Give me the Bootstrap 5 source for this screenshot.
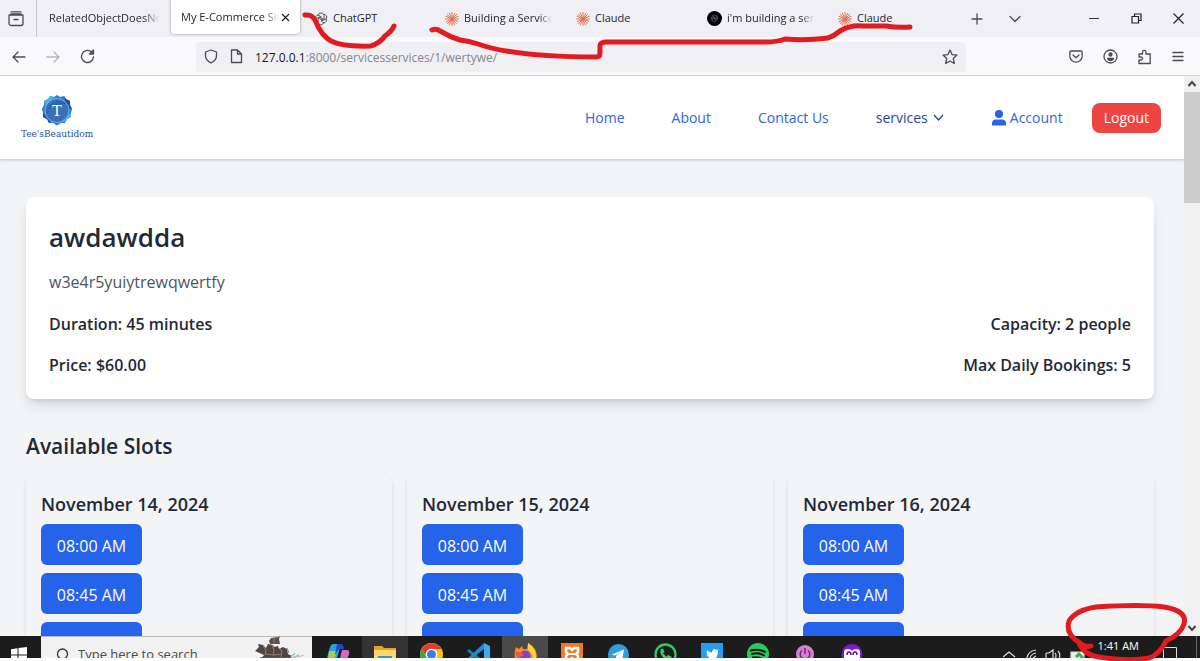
<!DOCTYPE html>
<html lang="en">
<head>
<meta charset="utf-8">
<meta name="viewport" content="width=device-width, initial-scale=1">
<title>My E-Commerce Site</title>
<link href="https://cdn.jsdelivr.net/npm/bootstrap@5.3.0/dist/css/bootstrap.min.css" rel="stylesheet">
<style>
body{font-family:"Open Sans","Noto Sans",sans-serif;color:#1f2937;background:#fff}
button{border:0;background:none;padding:0;color:inherit}
svg{display:block;flex:none}
.line-icon{fill:none;stroke:#4b4b55;stroke-width:1.3;stroke-linecap:round;stroke-linejoin:round}
/* browser */
.tabstrip{height:37px;background:#f0f0f4;font-size:11px;color:#26262c;padding-right:1px}
.history{width:37px;border-right:1px solid #c4c4cc;margin-right:2px}
.browser-tab{flex:0 1 131px;min-width:0;height:36px;padding:0 11px 0 13px;gap:5px}
.browser-tab span{white-space:nowrap;overflow:hidden;flex:1;text-align:left}
.fade-end span{-webkit-mask-image:linear-gradient(90deg,#000 85%,transparent);mask-image:linear-gradient(90deg,#000 85%,transparent)}
.browser-tab.text-only{padding:0 10px}
.browser-tab.current{flex-basis:129px;height:34px;background:#fff;border-radius:0 0 4px 4px;box-shadow:0 0 3px #0006;padding:0 10px;gap:2px;margin:0 1px;align-self:flex-start}
.tool-btn{width:34px;height:34px}
.wide-btn{width:42px;height:34px}
.toolbar{height:39px;background:#f9f9fb;border-bottom:1px solid #d3d3d8;padding:1px 5px 0 2px}
.address{flex:0 1 770px;height:30px;background:#f0f0f4;border-radius:4px;font-size:12px;padding:0 8px;gap:12px;margin-left:92px;color:#85858d}
.address span{padding-top:2px}
.address b{font-weight:400;color:#18181c}
/* site */
.viewport{background:#f3f4f6}
.site-nav{height:83px;background:#fff;box-shadow:0 1px 3px #0003;padding:0 23px 0 21px;font-size:14px}
.site-nav a{color:#2f66dd;text-decoration:none}
.brand-text{font:10px/14px "DejaVu Serif Condensed","DejaVu Serif",serif;color:#24509c}
.nav-links{gap:47px}
.btn-logout{background:#ef4444;color:#fff;border-radius:8px;height:30px;padding:0 12px;margin-left:-18px}
.site-main{padding:38px 30px 0 26px}
.service-card{background:#fff;border-radius:8px;box-shadow:0 8px 14px -3px #0002,0 3px 6px -3px #0002;padding:22px 23px}
.service-title{font-size:26px;line-height:36px;font-weight:600;margin:0 0 15px}
.service-text{font-size:16px;line-height:24px;color:#4b5563;margin:0 0 19px}
.facts{gap:18px}
.fact{font-size:16px;line-height:23px;font-weight:600}
.section-title{font-size:21px;line-height:30px;font-weight:600;margin:32px 0 14px}
.day-grid{display:grid;grid-template-columns:repeat(3,1fr);gap:15px}
.day-card{border-radius:8px;box-shadow:0 2px 4px #0000001c;padding:15px;height:260px}
.day-title{font-size:18px;line-height:28px;font-weight:600;margin:0 0 6px}
.slot{background:#2563eb;color:#fff;border-radius:6px;height:41px;min-width:101px;padding:2px 15px 0;font-size:16px}
.scroll-track{width:16px;background:#f0f0f0}
.scroll-thumb{height:111px;background:#cdcdcd}
/* desktop bar */
.deskbar{height:22px;background:#1c1c1c;margin-bottom:3px;color:#fff;font-size:12px}
.start-btn{width:41px;padding:11px 0 0 11px}
.search-box{width:271px;height:22px;background:#f2f2f2;border-top:1px solid #bbb;padding:7px 8px 0 13px}
.search-box input{border:0;background:none;outline:0;font-size:13px;line-height:20px;height:20px;width:150px;padding:0;color:#444}
.search-box input::placeholder{color:#4a4a4a;opacity:1}
.ship{margin-top:-8px}
.apps{width:560px;margin-left:3px}
.apps button{flex:1;height:22px;padding-top:7px;overflow:hidden}
.apps svg{margin:0 auto}
.apps .running{background:#333}
.apps .focused{background:#4a4a4a}
.tray{padding-right:3px}
.clock{line-height:20px;font-size:11px}
.tray-end{margin-left:23px}
/* pen marks lie over everything */
.ink{position:absolute;fill:none;stroke:#e11b1f;stroke-width:5;stroke-linecap:round;stroke-linejoin:round;pointer-events:none}
.ink-top{left:0;top:0}
.ink-clock{right:0;bottom:0}
</style>
</head>
<body class="vh-100 d-flex flex-column overflow-hidden position-relative">
<svg width="0" height="0" class="position-absolute"><defs>
<g id="burst" stroke="#dc7350" stroke-width="1" stroke-linecap="round"><path d="M7 .5V13.500M.5 7H13.500M2.300 2.600l9.200 9M11.700 2.300l-9.200 9.400M4.300 .9l5.200 12.200M9.800 1.200L4.300 12.800M1 4.300l12 5.200M1.200 9.800l11.900-5.500"/></g>
</defs></svg>

<div class="tabstrip d-flex align-items-center flex-shrink-0">
  <button class="history h-100 d-flex align-items-center justify-content-center" aria-label="History"><svg class="line-icon me-1" width="16" height="16" viewBox="0 0 16 16"><path d="M3 .8h10M1 4.200h14v8.300a2 2 0 0 1-2 2H3a2 2 0 0 1-2-2zM1.500 4l1.500-1h10l1.500 1M6 8.500h4"/></svg></button>
  <button class="browser-tab text-only fade-end d-flex align-items-center"><span>RelatedObjectDoesNo</span></button>
  <button class="browser-tab current fade-end d-flex align-items-center"><span>My E-Commerce Sit</span><svg width="9" height="9" viewBox="0 0 9 9" stroke="#222" stroke-width="1.200"><path d="M1 1l7 7M8 1L1 8"/></svg></button>
  <button class="browser-tab d-flex align-items-center"><svg width="14" height="14" viewBox="0 0 14 14" fill="none" stroke="#555" stroke-width="1"><g id="knot"><path d="M7 1a3 3 0 0 1 3 2v4L7 8.700M10 2.300a3 3 0 0 1 2.600 4L9 8.500 5.500 6.500M12 6.500A3 3 0 0 1 10 11L7 9M9.500 11A3 3 0 0 1 4 11V7l3-2M4 11.500A3 3 0 0 1 1.500 7l3.500-2 4 2M2 7.500A3 3 0 0 1 4 3l3.500 2M4 3a3 3 0 0 1 3-2"/></g></svg><span>ChatGPT</span></button>
  <button class="browser-tab fade-end d-flex align-items-center"><svg width="14" height="14"><use href="#burst"/></svg><span>Building a Service</span></button>
  <button class="browser-tab d-flex align-items-center"><svg width="14" height="14"><use href="#burst"/></svg><span>Claude</span></button>
  <button class="browser-tab fade-end d-flex align-items-center"><svg width="15" height="15" viewBox="0 0 16 16"><circle cx="8" cy="8" r="8"/><g transform="translate(3.500 3.500) scale(.64)" fill="none" stroke="#777"><use href="#knot"/></g></svg><span>i'm building a serv</span></button>
  <button class="browser-tab d-flex align-items-center"><svg width="14" height="14"><use href="#burst"/></svg><span>Claude</span></button>
  <button class="tool-btn d-flex align-items-center justify-content-center mx-1" aria-label="New tab"><svg class="line-icon" width="12" height="12"><path d="M6 1v10M1 6h10"/></svg></button>
  <button class="tool-btn d-flex align-items-center justify-content-center" aria-label="List tabs"><svg class="line-icon" width="12" height="12"><path d="M1 3.500l5 5 5-5"/></svg></button>
  <div class="ms-auto d-flex">
    <button class="wide-btn d-flex align-items-center justify-content-center" aria-label="Minimise"><svg width="10" height="10" stroke="#333"><path d="M0 4.500h10"/></svg></button>
    <button class="wide-btn d-flex align-items-center justify-content-center" aria-label="Restore"><svg width="11" height="11" fill="none" stroke="#222" stroke-width="1.200"><path d="M1 3.500h6.500V10H1zM3.500 3.500V1H10v6.500H7.500"/></svg></button>
    <button class="wide-btn d-flex align-items-center justify-content-center" aria-label="Close"><svg width="11" height="11" stroke="#222" stroke-width="1.200"><path d="M.5.5l10 10M10.500.5l-10 10"/></svg></button>
  </div>
</div>

<div class="toolbar d-flex align-items-center flex-shrink-0">
  <button class="tool-btn d-flex align-items-center justify-content-center" aria-label="Back"><svg class="line-icon" width="14" height="14"><path d="M13 7H1M6 2L1 7l5 5"/></svg></button>
  <button class="tool-btn d-flex align-items-center justify-content-center" aria-label="Forward" disabled><svg class="line-icon" opacity=".4" width="14" height="14"><path d="M1 7h12M8 2l5 5-5 5"/></svg></button>
  <button class="tool-btn d-flex align-items-center justify-content-center" aria-label="Reload"><svg class="line-icon" width="15" height="15"><path d="M13.500 8A6 6 0 1 1 11 2.600l2 2M13.500 1v4h-4z"/></svg></button>
  <div class="address d-flex align-items-center">
    <svg class="line-icon" width="14" height="15"><path d="M7 1l5.500 2v4c0 3-2.500 5.500-5.500 7C4 12.500 1.500 10 1.500 7V3z"/></svg>
    <svg class="line-icon" width="13" height="15"><path d="M1.500 1H7.500l4 4v8.500h-10zM7.500 1v4h4"/></svg>
    <span class="flex-grow-1"><b>127.0.0.1</b>:8000/servicesservices/1/wertywe/</span>
    <button aria-label="Bookmark"><svg class="line-icon" width="16" height="16"><path d="M8 1l2 4.600 5 .5-3.700 3.400 1 5L8 12l-4.300 2.500 1-5L1 6.100l5-.5z"/></svg></button>
  </div>
  <div class="ms-auto d-flex">
    <button class="tool-btn d-flex align-items-center justify-content-center" aria-label="Save"><svg class="line-icon" width="14" height="13"><path d="M2 1h10a1.200 1.200 0 0 1 1.200 1.200V6A6 6 0 0 1 .8 6V2.200A1.200 1.200 0 0 1 2 1zM4 5l3 2.700L10 5"/></svg></button>
    <button class="tool-btn d-flex align-items-center justify-content-center" aria-label="Profile"><svg class="line-icon" width="15" height="15"><circle cx="7.500" cy="7.500" r="6.500"/><circle cx="7.500" cy="5.500" r="1.500" fill="#4b4b55"/><path fill="#4b4b55" d="M4.500 9.500h6q-.5 2-3 2T4.500 9.500z"/></svg></button>
    <button class="tool-btn d-flex align-items-center justify-content-center" aria-label="Extensions"><svg class="line-icon" width="15" height="16"><path d="M2 5h3.500V3a1.700 1.700 0 0 1 3.400 0v2h4.300v9.500H2V11h2a1.500 1.500 0 0 0 0-3H2z"/></svg></button>
    <button class="tool-btn d-flex align-items-center justify-content-center" aria-label="Menu"><svg class="line-icon" width="12" height="12"><path d="M1 1.500h10M1 5.500h10M1 9.500h10"/></svg></button>
  </div>
</div>

<div class="d-flex flex-grow-1 overflow-hidden">
  <div class="viewport flex-grow-1 overflow-hidden">
    <nav class="site-nav d-flex align-items-center justify-content-between">
      <a href="#" class="d-flex flex-column align-items-center">
        <svg width="32" height="33" viewBox="0 0 32 33"><path fill="#2c82c9" d="M16 1l3 2 4-1 2 3 4 2v4l2 4-1 4 0 4-4 2-2 4-4 0-4 2.500-4-2.500-4 0-2-4-4-2 0-4-1-4 2-4V7l4-2 2-3 4 1z"/><path fill="#1c4e96" d="M23 2l2 3 4 2v4l2 4-5 0zM2 19l8 8-2 2-2-4-4-2z"/><path fill="#49b6e6" d="M3 7l4-2 2-3 4 1-8 9zM22 29l4-4 4-2 0-4-7 7z"/><circle cx="16" cy="16.500" r="12" fill="#3a6fb9" stroke="#7ab4e4"/><path fill="#2c5ba8" d="M6 20Q10 9 26 10A12 12 0 0 0 6 20z" opacity=".6"/><text x="16" y="22" text-anchor="middle" font-family="Liberation Serif,serif" font-size="16" fill="#fff">T</text></svg>
        <span class="brand-text">Tee'sBeautidom</span>
      </a>
      <div class="nav-links d-flex align-items-center">
        <a href="#">Home</a><a href="#">About</a><a href="#">Contact Us</a>
        <a href="#" class="d-flex align-items-center gap-1" style="color:#2446a8">services <svg width="13" height="12" fill="none" stroke="#2446a8" stroke-width="1.300"><path d="M2 3l4.500 5L11 3"/></svg></a>
        <a href="#" class="d-flex align-items-center gap-1"><svg width="14" height="16" fill="#2563eb"><circle cx="7" cy="4" r="4"/><path d="M0 15.500v-2Q0 9.500 4 9.500h6q4 0 4 4v2z"/></svg>Account</a>
        <button class="btn-logout">Logout</button>
      </div>
    </nav>
    <main class="site-main">
      <section class="service-card">
        <h1 class="service-title">awdawdda</h1>
        <p class="service-text">w3e4r5yuiytrewqwertfy</p>
        <div class="facts d-flex flex-column">
          <div class="fact d-flex justify-content-between"><span>Duration: 45 minutes</span><span>Capacity: 2 people</span></div>
          <div class="fact d-flex justify-content-between"><span>Price: $60.00</span><span>Max Daily Bookings: 5</span></div>
        </div>
      </section>
      <h2 class="section-title">Available Slots</h2>
      <div class="day-grid">
        <section class="day-card"><h3 class="day-title">November 14, 2024</h3><div class="d-flex flex-column align-items-start gap-2"><button class="slot">08:00 AM</button><button class="slot">08:45 AM</button><button class="slot" aria-label="Next slot"></button></div></section>
        <section class="day-card"><h3 class="day-title">November 15, 2024</h3><div class="d-flex flex-column align-items-start gap-2"><button class="slot">08:00 AM</button><button class="slot">08:45 AM</button><button class="slot" aria-label="Next slot"></button></div></section>
        <section class="day-card"><h3 class="day-title">November 16, 2024</h3><div class="d-flex flex-column align-items-start gap-2"><button class="slot">08:00 AM</button><button class="slot">08:45 AM</button><button class="slot" aria-label="Next slot"></button></div></section>
      </div>
    </main>
  </div>
  <div class="scroll-track d-flex flex-column flex-shrink-0">
    <svg width="16" height="16" fill="none" stroke="#444" stroke-width="2"><path d="M4.500 10L8 6l3.500 4"/></svg>
    <div class="scroll-thumb"></div>
    <svg class="mt-auto" width="16" height="16" fill="none" stroke="#444" stroke-width="2"><path d="M4.500 6L8 10l3.500-4"/></svg>
  </div>
</div>

<div class="deskbar d-flex overflow-hidden flex-shrink-0">
  <button class="start-btn flex-shrink-0" aria-label="Start"><svg width="16" height="16" fill="#fff"><path d="M0 2.200L6.500 1.200V7.500H0zM7.500 1L16 0v7.500H7.500zM0 8.500h6.500v6.300L0 13.800zM7.500 8.500H16V16l-8.500-1z"/></svg></button>
  <div class="search-box d-flex gap-2 flex-shrink-0">
    <svg class="mt-1" width="16" height="16" fill="none" stroke="#333" stroke-width="1.300"><circle cx="8.500" cy="6" r="5"/><path d="M5 10l-4 4"/></svg>
    <input type="text" aria-label="Search" placeholder="Type here to search">
    <svg class="ship ms-auto" width="50" height="30" viewBox="0 0 50 30"><path d="M1 15l4-4-1-3 5 1 3 3 2-4 5 1 1 2 4-1 1 3 4-2 4 2 1 5 4 2-4 5-5 3H11l-4-5 3-4z" fill="#51463f"/><path d="M15 5l2-3 7-1 2-1-1 3 1 5-10 0z" fill="#5c5048"/><path d="M9 10l3 4-1 5m7-10l2 5-1 5m7-7l2 4-1 5m6-9l2 5M20 2v6M12 18l8 1 8-1" fill="none" stroke="#8f8073"/><path d="M37 21l4-4m-4 6l8-4" stroke="#8ac2da" stroke-width="1.500"/><path d="M44 21l6-2" stroke="#d8b595"/><path d="M6 21h30l-3 6H10z" fill="#77503a"/></svg>
  </div>
  <div class="apps d-flex flex-shrink-0">
    <button aria-label="Copilot"><svg width="24" height="24"><path fill="#2c9fe0" d="M7 1h8l-5 18H3Q0 19 1 15L4 4q1-3 3-3z"/><path fill="#a5cf4c" d="M3 8h8L8 17H2z"/><path fill="#2446c8" d="M11 1h4q2 0 3 5h-4q-2 0-3 3l-2 3z"/><path fill="#d467c7" d="M16 7h5q3 0 2 4l-3 9q-1 3-4 3h-4z"/></svg></button>
    <button class="running" aria-label="Files"><svg width="22" height="22"><path fill="#e6a22c" d="M0 3h8l2 2h12v4H0z"/><path fill="#ffd667" d="M0 7h22v14H0z"/><path fill="#3d8cd8" d="M4 13h14v9H4z"/></svg></button>
    <button aria-label="Chrome"><svg width="23" height="23"><circle cx="11.500" cy="11.500" r="11.500" fill="#fbc116"/><path fill="#e33b2e" d="M1.500 6A11.500 11.500 0 0 1 21.500 6H11.500L7 14z"/><path fill="#2da94f" d="M1.500 6l6 10 4 7A11.500 11.500 0 0 1 1.500 6z"/><circle cx="11.500" cy="11.500" r="5.800" fill="#fff"/><circle cx="11.500" cy="11.500" r="4.500" fill="#3c7fec"/></svg></button>
    <button aria-label="Code"><svg width="23" height="23"><path fill="#1679bd" d="M2 6l15 12v5L0 8z"/><path fill="#1f8ad2" d="M17 0v6L2 18l-2-2z"/><path fill="#3baaf2" d="M17 0l6 3v17l-6 3z"/></svg></button>
    <button class="focused" aria-label="Firefox"><svg width="23" height="23"><path fill="#ff8a24" d="M2 4l3 2 3-3 1 3h4l1-6q7 4 8 9 3 8-3 12-8 4-14 0Q-2 15 2 4z"/><path fill="#ffd43a" d="M14 0q8 5 8 14l-3 5q1-8-5-12z"/><circle cx="11" cy="13" r="5.500" fill="#7b3fe0"/><path fill="#f2583a" d="M1 9l6 0 3 3-4 2 5 4-7 1z"/></svg></button>
    <button aria-label="XAMPP"><svg width="22" height="22"><path fill="#ee7a24" d="M0 0h22v22H0z"/><path d="M5 5h4l2 2 2-2h4v4l-2 2 2 2v4h-4l-2-2-2 2H5v-4l2-2-2-2z" fill="none" stroke="#fff" stroke-width="2.500" stroke-linejoin="round"/><path d="M8 11h6" stroke="#fff" stroke-width="2"/></svg></button>
    <button aria-label="Telegram"><svg width="21" height="22"><circle cx="10.500" cy="11.500" r="10.500" fill="#2f9fdb"/><path fill="#fff" d="M4 11.500L16 6.500l-2 11-4-3-2 2v-3.500l5-4-6 3.500z"/></svg></button>
    <button aria-label="WhatsApp"><svg width="23" height="23" fill="none"><circle cx="11.500" cy="11.500" r="10" stroke="#35c863" stroke-width="2.300"/><path fill="#35c863" d="M7 6l2-.5L10.500 9 9 10.500l3.500 3L14 12l3.500 1.500-.5 3Q9 18 6.500 10 6 7.500 7 6z"/></svg></button>
    <button aria-label="Twitter"><svg width="22" height="22"><path fill="#249df0" d="M0 0h22v22H0z"/><path fill="#fff" d="M6 7q2.500 2.500 5 2.500Q11 6 14 6l2 1 1.500-.5L17 8q0 9-7 9l-4-1 2.500-1-2-2L5.500 10z"/></svg></button>
    <button aria-label="Spotify"><svg width="22" height="22" fill="none" stroke="#111" stroke-width="2" stroke-linecap="round"><circle cx="11" cy="11" r="11" fill="#24cc5c" stroke="none"/><path d="M4 7.500q8-2 14 1.500M5 11q7-2 12 1.500M6 14.500q6-1 9 1.500"/></svg></button>
    <button aria-label="Power"><svg width="20" height="22" fill="none" stroke="#7a2377" stroke-width="1.500"><circle cx="10" cy="11" r="9" fill="#d77fd0" stroke="none"/><path d="M10 5v6M7 7.500a4.800 4.800 0 1 0 6 0"/></svg></button>
    <button aria-label="Owl"><svg width="22" height="22"><circle cx="11" cy="11.500" r="10.500" fill="#8018cc"/><path fill="#fff" d="M3 9q0-3 4-3 3 0 4 2 1-2 4-2 4 0 4 3v7H3z"/><path fill="none" stroke="#51149c" stroke-width="1.500" d="M6 12q0-3 2-3t2 3M12 12q0-3 2-3t2 3"/></svg></button>
  </div>
  <div class="tray ms-auto d-flex">
    <svg width="95" height="22" fill="none" stroke="#ddd" stroke-width="1.200"><path d="M0 21l6-5 6 5M24 22q1-7 9-8M27 22q1-4 6-5M30 22l3-2M43 17h3l4-3v8M43 17v6M52 17q2 2 0 6M55 15q3 3 1 8"/><path d="M68 16h13v8H68z" fill="#eee"/><path d="M73 21l3-3 4 4" stroke="#38b44a" stroke-width="3"/></svg>
    <span class="clock">1:41 AM</span>
    <svg class="tray-end" width="35" height="22" fill="none" stroke="#ddd"><path d="M1.500 22V11.500h13V22"/><path d="M34.500 0v22" stroke="#666"/></svg>
  </div>
</div>

<svg class="ink ink-top" width="930" height="76"><path d="M305 15q8-1 11 7 5 13 15 19 12 6 40 5 9-3 14-10 7-5 9-10"/><path d="M432 30q4-2 8 1 10 6 20 9 9 1 18 4Q515 57 596 57q4 0 4-4V46q0-4 6-4H765q12 0 20-3 21 2 43-1 6-2 12-7 10-6 22-5 14 0 24 0 12 2 24 1"/></svg>
<svg class="ink ink-clock" width="140" height="64"><path d="M31 49q-6 2-11-3Q5 37 9 24 16 13 36 10q45-3 68 0 24 4 20 17-3 10-18 17-7 14-17 17-20 4-50-1-15-2-20-14"/></svg>
<script src="https://cdn.jsdelivr.net/npm/bootstrap@5.3.0/dist/js/bootstrap.bundle.min.js"></script>
</body>
</html>
